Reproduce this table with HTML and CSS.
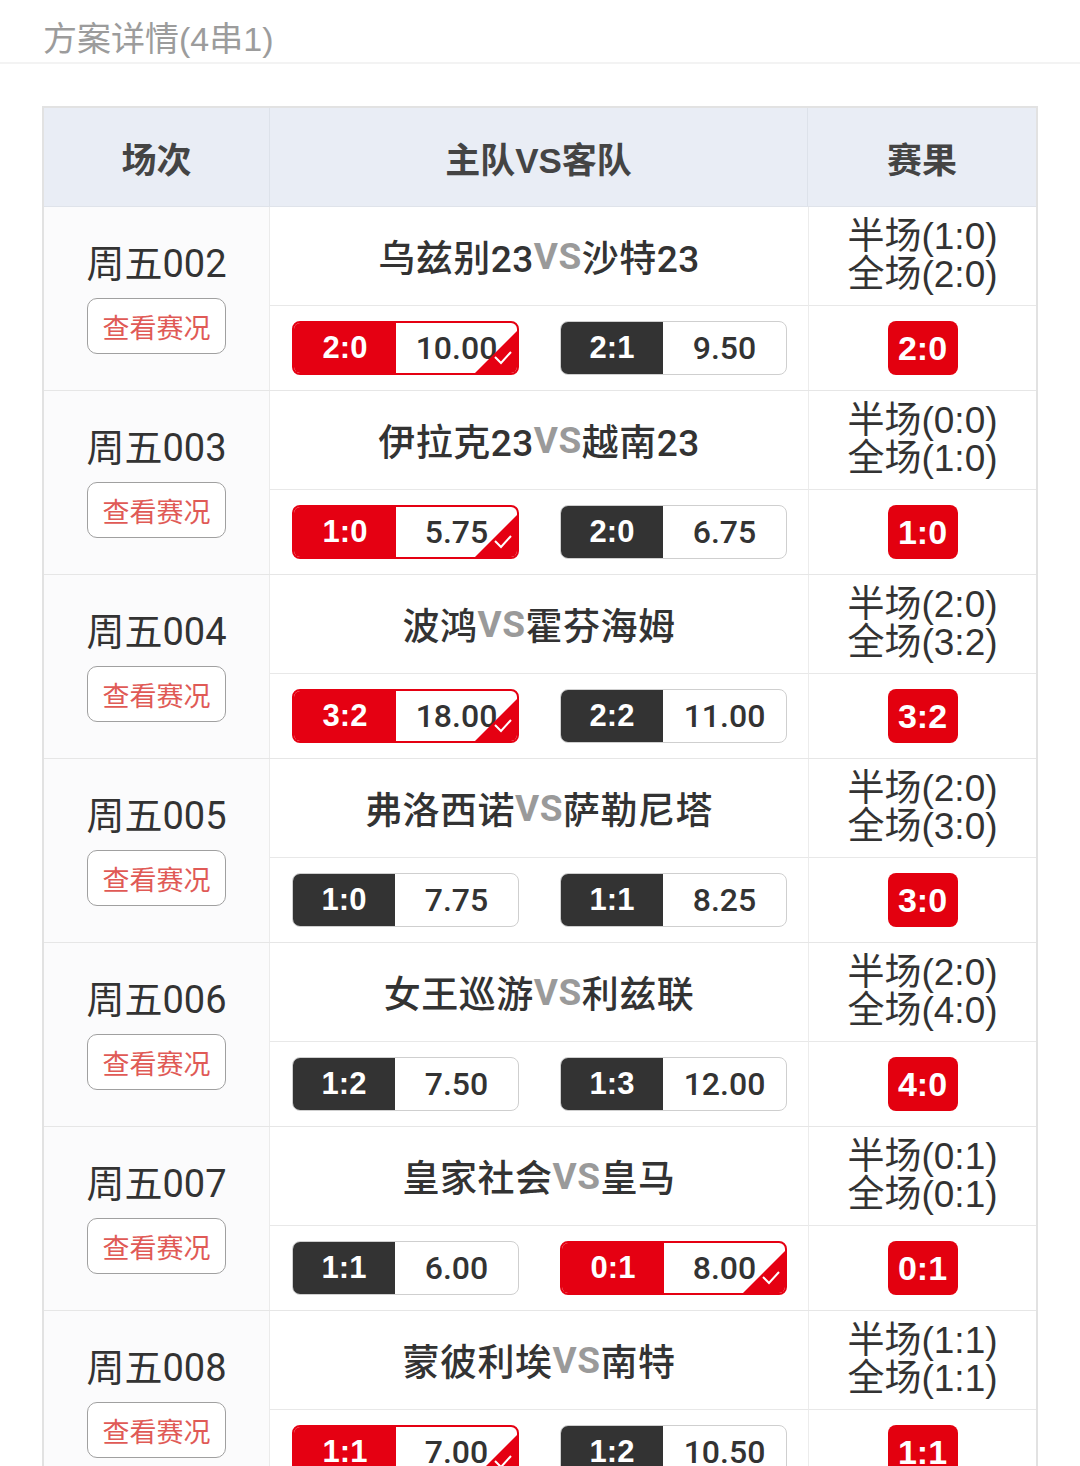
FILE: index.html
```html
<!DOCTYPE html>
<html lang="zh">
<head>
<meta charset="utf-8">
<title>方案详情</title>
<link rel="stylesheet" href="styles.css">
</head>
<body>
<div class="title">方案详情(4串1)</div>
<div class="table">
  <div class="thead">
    <div class="th">场次</div>
    <div class="th">主队VS客队</div>
    <div class="th last">赛果</div>
  </div>

  <div class="match">
    <div class="code-cell"><div class="code">周五002</div><div class="btn">查看赛况</div></div>
    <div class="teams">乌兹别23<span class="vs">VS</span>沙特23</div>
    <div class="score"><span>半场(1:0)</span><span>全场(2:0)</span></div>
    <div class="odds-cell">
      <div class="odd sel"><span class="lbl">2:0</span><span class="val">10.00</span><svg class="tick" viewBox="0 0 42 42"><path d="M42 0 L42 42 L0 42 Z" fill="#e50012"/><polyline points="20,26 26,32 36,21" fill="none" stroke="#fff" stroke-width="2"/></svg></div>
      <div class="odd"><span class="lbl">2:1</span><span class="val">9.50</span></div>
    </div>
    <div class="result-cell"><span class="badge">2:0</span></div>
  </div>

  <div class="match">
    <div class="code-cell"><div class="code">周五003</div><div class="btn">查看赛况</div></div>
    <div class="teams">伊拉克23<span class="vs">VS</span>越南23</div>
    <div class="score"><span>半场(0:0)</span><span>全场(1:0)</span></div>
    <div class="odds-cell">
      <div class="odd sel"><span class="lbl">1:0</span><span class="val">5.75</span><svg class="tick" viewBox="0 0 42 42"><path d="M42 0 L42 42 L0 42 Z" fill="#e50012"/><polyline points="20,26 26,32 36,21" fill="none" stroke="#fff" stroke-width="2"/></svg></div>
      <div class="odd"><span class="lbl">2:0</span><span class="val">6.75</span></div>
    </div>
    <div class="result-cell"><span class="badge">1:0</span></div>
  </div>

  <div class="match">
    <div class="code-cell"><div class="code">周五004</div><div class="btn">查看赛况</div></div>
    <div class="teams">波鸿<span class="vs">VS</span>霍芬海姆</div>
    <div class="score"><span>半场(2:0)</span><span>全场(3:2)</span></div>
    <div class="odds-cell">
      <div class="odd sel"><span class="lbl">3:2</span><span class="val">18.00</span><svg class="tick" viewBox="0 0 42 42"><path d="M42 0 L42 42 L0 42 Z" fill="#e50012"/><polyline points="20,26 26,32 36,21" fill="none" stroke="#fff" stroke-width="2"/></svg></div>
      <div class="odd"><span class="lbl">2:2</span><span class="val">11.00</span></div>
    </div>
    <div class="result-cell"><span class="badge">3:2</span></div>
  </div>

  <div class="match">
    <div class="code-cell"><div class="code">周五005</div><div class="btn">查看赛况</div></div>
    <div class="teams">弗洛西诺<span class="vs">VS</span>萨勒尼塔</div>
    <div class="score"><span>半场(2:0)</span><span>全场(3:0)</span></div>
    <div class="odds-cell">
      <div class="odd"><span class="lbl">1:0</span><span class="val">7.75</span></div>
      <div class="odd"><span class="lbl">1:1</span><span class="val">8.25</span></div>
    </div>
    <div class="result-cell"><span class="badge">3:0</span></div>
  </div>

  <div class="match">
    <div class="code-cell"><div class="code">周五006</div><div class="btn">查看赛况</div></div>
    <div class="teams">女王巡游<span class="vs">VS</span>利兹联</div>
    <div class="score"><span>半场(2:0)</span><span>全场(4:0)</span></div>
    <div class="odds-cell">
      <div class="odd"><span class="lbl">1:2</span><span class="val">7.50</span></div>
      <div class="odd"><span class="lbl">1:3</span><span class="val">12.00</span></div>
    </div>
    <div class="result-cell"><span class="badge">4:0</span></div>
  </div>

  <div class="match">
    <div class="code-cell"><div class="code">周五007</div><div class="btn">查看赛况</div></div>
    <div class="teams">皇家社会<span class="vs">VS</span>皇马</div>
    <div class="score"><span>半场(0:1)</span><span>全场(0:1)</span></div>
    <div class="odds-cell">
      <div class="odd"><span class="lbl">1:1</span><span class="val">6.00</span></div>
      <div class="odd sel"><span class="lbl">0:1</span><span class="val">8.00</span><svg class="tick" viewBox="0 0 42 42"><path d="M42 0 L42 42 L0 42 Z" fill="#e50012"/><polyline points="20,26 26,32 36,21" fill="none" stroke="#fff" stroke-width="2"/></svg></div>
    </div>
    <div class="result-cell"><span class="badge">0:1</span></div>
  </div>

  <div class="match">
    <div class="code-cell"><div class="code">周五008</div><div class="btn">查看赛况</div></div>
    <div class="teams">蒙彼利埃<span class="vs">VS</span>南特</div>
    <div class="score"><span>半场(1:1)</span><span>全场(1:1)</span></div>
    <div class="odds-cell">
      <div class="odd sel"><span class="lbl">1:1</span><span class="val">7.00</span><svg class="tick" viewBox="0 0 42 42"><path d="M42 0 L42 42 L0 42 Z" fill="#e50012"/><polyline points="20,26 26,32 36,21" fill="none" stroke="#fff" stroke-width="2"/></svg></div>
      <div class="odd"><span class="lbl">1:2</span><span class="val">10.50</span></div>
    </div>
    <div class="result-cell"><span class="badge">1:1</span></div>
  </div>
</div>
</body>
</html>
```

FILE: styles.css
```css
* { box-sizing: border-box; }
body {
  margin: 0;
  background: #fff;
  font-family: "Liberation Sans", "Noto Sans CJK SC", sans-serif;
  color: #333;
}
.title {
  height: 64px;
  padding: 14px 0 0 43px;
  line-height: 50px;
  font-size: 34px;
  color: #9c9c9c;
  border-bottom: 2px solid #f3f3f3;
}
.table {
  margin: 42px 0 0 42px;
  width: 996px;
  border-left: 2px solid #e2e2e2;
  border-right: 2px solid #e2e2e2;
  border-top: 2px solid #e2e2e2;
}
.thead {
  display: grid;
  grid-template-columns: 226px 538px 228px;
  height: 99px;
  background: #e9edf5;
  border-bottom: 1px solid #dfe3ea;
}
.th {
  display: flex;
  align-items: center;
  justify-content: center;
  font-size: 35px;
  font-weight: bold;
  color: #444;
  border-right: 1px solid #dde2ea;
}
.th.last { border-right: none; }
.match {
  display: grid;
  grid-template-columns: 226px 538px 228px;
  grid-template-rows: 99px 84px;
  border-bottom: 1px solid #e6e6e6;
}
.code-cell {
  grid-row: 1 / 3;
  display: flex;
  flex-direction: column;
  align-items: center;
  justify-content: center;
  gap: 14px;
  background: #fbfbfc;
  border-right: 1px solid #ebebeb;
  padding-top: 1px;
}
.code {
  font-family: "Roboto", "Noto Sans CJK SC", sans-serif;
  font-size: 38px;
  line-height: 40px;
  color: #333;
}
.btn {
  width: 139px;
  height: 56px;
  border: 1px solid #a0a0a0;
  border-radius: 10px;
  display: flex;
  align-items: center;
  justify-content: center;
  font-size: 27px;
  color: #e05a56;
  background: #fff;
}
.teams {
  display: flex;
  align-items: center;
  justify-content: center;
  font-family: "Roboto", "Noto Sans CJK SC", sans-serif;
  font-size: 37px;
  font-weight: 500;
  color: #333;
  letter-spacing: 0.5px;
  border-bottom: 1px solid #e8e8e8;
}
.vs { color: #9a9a9a; font-weight: bold; }
.score {
  display: flex;
  flex-direction: column;
  align-items: center;
  justify-content: center;
  font-size: 37px;
  line-height: 38px;
  color: #333;
  border-left: 1px solid #ececec;
  border-bottom: 1px solid #e8e8e8;
}
.odds-cell {
  display: flex;
  align-items: center;
  justify-content: space-between;
  padding: 0 21px 0 22px;
}
.odd {
  position: relative;
  width: 227px;
  height: 54px;
  display: flex;
  border: 1px solid #cfcfcf;
  border-radius: 8px;
  overflow: hidden;
}
.lbl {
  width: 102px;
  display: flex;
  align-items: center;
  justify-content: center;
  background: #333;
  color: #fff;
  font-weight: bold;
  font-size: 31px;
}
.val {
  flex: 1;
  display: flex;
  align-items: center;
  justify-content: center;
  font-family: "Roboto", "Noto Sans CJK SC", sans-serif;
  font-weight: 500;
  font-size: 32px;
  color: #333;
}
.odd.sel { border: 2px solid #e50012; }
.odd.sel .lbl { background: #e50012; }
.tick {
  position: absolute;
  right: 0;
  bottom: 0;
  width: 42px;
  height: 42px;
}
.result-cell {
  display: flex;
  align-items: center;
  justify-content: center;
  border-left: 1px solid #ececec;
}
.badge {
  width: 70px;
  height: 54px;
  border-radius: 8px;
  background: #e3000f;
  color: #fff;
  font-weight: bold;
  font-size: 34px;
  display: flex;
  align-items: center;
  justify-content: center;
}
```
